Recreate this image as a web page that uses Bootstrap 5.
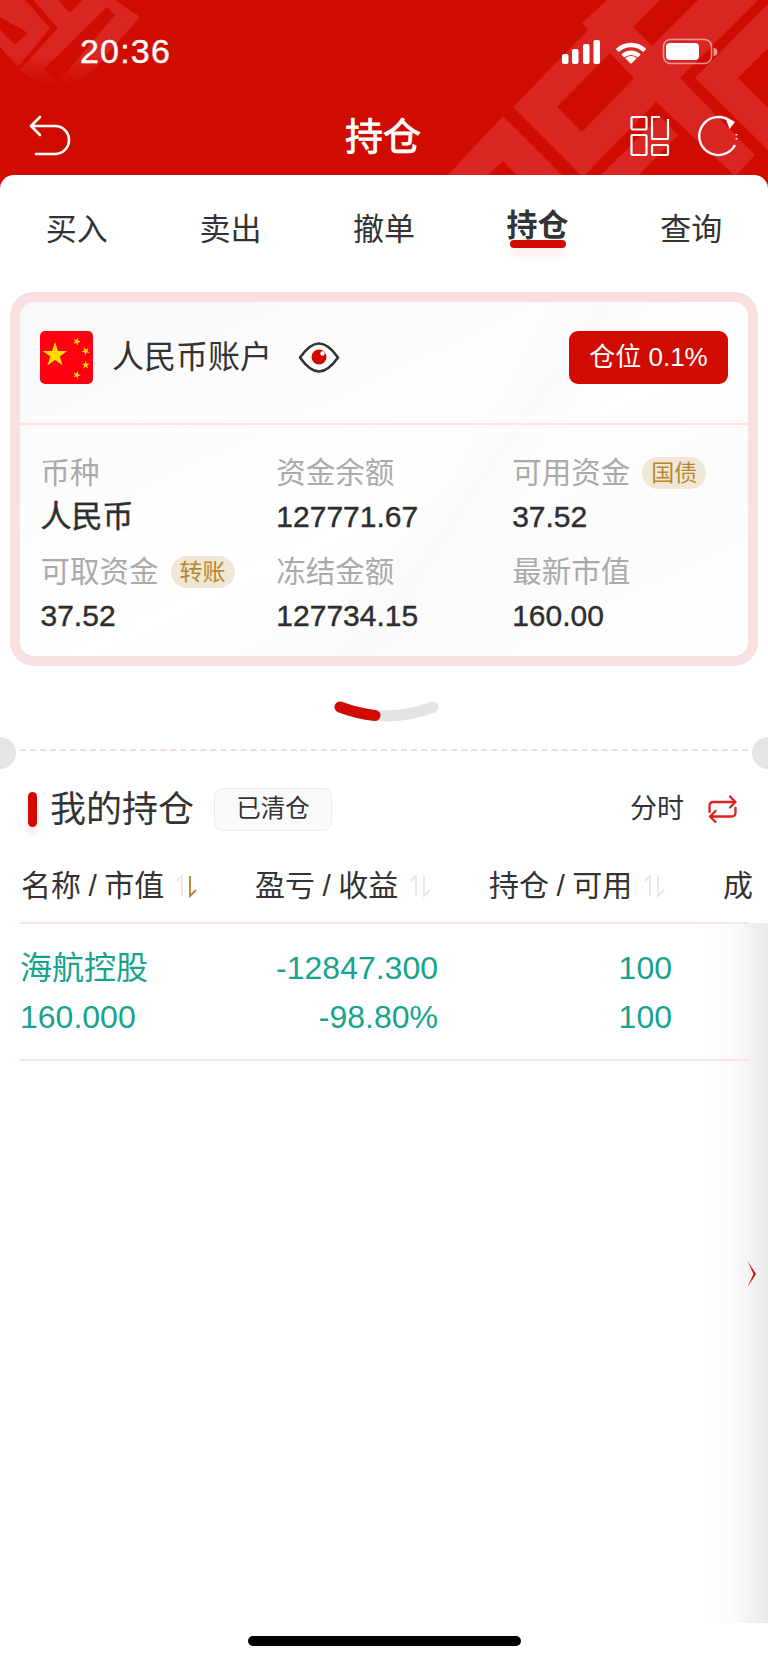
<!DOCTYPE html>
<html lang="zh-CN">
<head>
<meta charset="utf-8">
<title>持仓</title>
<link href="https://cdn.jsdelivr.net/npm/bootstrap@5.3.0/dist/css/bootstrap.min.css" rel="stylesheet">
<style>
html,body{margin:0;height:100%;}
body{width:768px;height:1663px;overflow:hidden;font-family:"Liberation Sans","Noto Sans CJK SC",sans-serif;color:#333;background:#fff;}
.shell{width:768px;height:1663px;background:#d00c00;position:relative;overflow:hidden;}
.hero-art{position:absolute;left:0;top:0;width:768px;height:176px;}
.hero{position:relative;height:175px;color:#fff;}
.status-row{height:100px;padding:0 50px 0 80px;}
.clock{font-size:34px;line-height:1;letter-spacing:1.2px;margin-top:2px;-webkit-text-stroke:.4px #fff;}
.nav-row{height:55px;margin-top:8px;padding:0 28px 0 26px;}
.nav-side{flex:1 1 0;}
.nav-title{font-size:38px;font-weight:400;line-height:1;margin-top:2px;-webkit-text-stroke:.8px #fff;}
.sheet{position:relative;flex:1 1 auto;background:#fff;border-radius:14px 14px 0 0;}
.tab-row{height:117px;}
.tab-cell{width:153.6px;text-align:center;padding-top:35px;font-size:31px;line-height:40px;color:#333;}
.tab-cell.is-on{padding-top:31px;}
.tab-cell.is-on span{position:relative;display:inline-block;font-weight:700;}
.tab-cell.is-on span::after{content:"";position:absolute;left:3px;right:3px;top:34px;height:8px;border-radius:4px;background:#d00c00;box-shadow:0 7px 8px rgba(208,12,0,.1);}
.acct{margin:0 10px;border:10px solid #f9e0e0;border-radius:24px;height:374px;background:linear-gradient(125deg,rgba(250,250,250,0) 54%,#fafafa 60%,rgba(250,250,250,0) 67%),linear-gradient(155deg,#f8f8f8 0%,#fdfdfd 38%,#fff 55%,#fbfbfb 72%,#fff 100%);}
.acct-head{height:123px;padding:29px 20px 0 20px;border-bottom:2px solid #fae4e4;}
.acct-name{font-size:32px;line-height:53px;margin-left:19px;color:#333;}
.eye{margin-left:25px;}
.acct-pos{width:159px;height:53px;border-radius:9px;background:#d00c00;color:#fff;font-size:26px;line-height:53px;text-align:center;}
.acct-grid{padding:26px 0 0 20.5px;}
.acct-item{height:99px;}
.acct-label{font-size:29.5px;line-height:44px;color:#aaa;white-space:nowrap;}
.acct-value{font-size:30px;line-height:44px;color:#2e2e2e;-webkit-text-stroke:.4px #2e2e2e;}
.acct-cny{font-size:31px;}
.tag-gold{display:inline-block;vertical-align:top;margin:6px 0 0 12px;width:64px;height:32px;border-radius:16px;background:#f1e7d6;color:#b8862f;font-size:23px;line-height:32px;text-align:center;}
.arc-wrap{margin-top:34px;height:24px;}
.cut-line{position:relative;margin:25px 20px 0;border-top:2px dashed #fbd9d9;}
.cut-dot{position:absolute;top:-14px;width:32px;height:32px;border-radius:50%;background:#e5e5e5;}
.cut-dot.l{left:-36px;}
.cut-dot.r{right:-36px;}
.hold-head{margin-top:37px;height:43px;padding:0 30px 0 28px;}
.hold-bar{width:9px;height:35px;border-radius:5px;background:#d00c00;box-shadow:0 8px 7px rgba(208,12,0,.12);}
.hold-title{font-size:36px;line-height:43px;margin-left:13px;color:#333;}
.hold-btn{margin-left:20px;width:118px;height:43px;border:1.5px solid #ececec;border-radius:9px;background:#fafafa;font-size:24.5px;line-height:40px;text-align:center;color:#333;}
.hold-mode{font-size:27px;line-height:43px;color:#333;margin-right:24px;}
.tbl-clip{margin:0 19px 0 20px;}
.pos-table{width:729px;table-layout:fixed;margin:0;}
.pos-table th,.pos-table td{padding:0;background:transparent;border:0;box-shadow:none;}
.pos-table th{width:234px;padding:35px 0 16px 1px;font-size:30px;line-height:40px;font-weight:400;color:#333;white-space:nowrap;border-bottom:2px solid #fde3e3;}
.pos-table th.tail-col{width:27px;}
.pos-table td{padding:20px 50px 17px 0;font-size:32px;line-height:49px;color:#17a38d;text-align:right;border-bottom:2px solid #fde3e3;}
.pos-table td.first-cell{padding-left:0;text-align:left;}
.pos-table td.tail-col{padding:0;}
.pos-table tr{--bs-table-bg:transparent;}
.slashy{font-family:"Liberation Sans",sans-serif;margin:0 7.5px;}
.sort-ico{margin-left:11px;vertical-align:-3px;}
.edge-fade{position:absolute;right:0;top:748px;width:68px;height:700px;background:linear-gradient(90deg,rgba(232,232,232,0),rgba(232,232,232,.15) 45%,#ebebeb 100%);}
.edge-chev{position:absolute;left:47px;top:337px;}
.home-bar{position:absolute;left:248px;bottom:17px;width:273px;height:10px;border-radius:5px;background:#000;}
</style>
</head>
<body>
<div class="shell d-flex flex-column">
  <svg class="hero-art" viewBox="0 0 768 176" aria-hidden="true">
    <defs>
      <linearGradient id="fadeL" gradientUnits="userSpaceOnUse" x1="0" y1="55" x2="0" y2="84">
        <stop offset="0" stop-color="#da2622"/><stop offset="1" stop-color="#d00c00"/>
      </linearGradient>
    </defs>
    <polygon fill="#da2622" points="607,0 582,23 588,30 513,107 582,176 768,176 768,0"/>
    <polygon fill="#da2622" points="503,116 447,176 487,176 503,161 518,176 563,176"/>
    <g fill="#d00c00">
      <polygon points="557,107 610,53 634,78 582,132"/>
      <polygon points="656,102 584,176 600,176 660,116 678,135 638,176 735,176"/>
      <polygon points="680,78 758,0 772,0 695,78 768,150 768,176 735,176 755,155"/>
      <polygon points="738,78 768,48 768,108"/>
      <polygon points="660,0 633,27 652,46 698,0"/>
    </g>
    <polygon fill="url(#fadeL)" points="0,0 25,0 50,28 18,67 0,47"/>
    <polygon fill="url(#fadeL)" points="33,0 58,28 20,70 45,88 70,88 95,68 140,17 115,0"/>
    <g fill="#d00c00">
      <polygon points="0,17 28,33 15,45 0,30"/>
      <polygon points="58,0 70,13 82,0"/>
      <polygon points="43,70 107,7 115,15 58,82"/>
    </g>
  </svg>

  <header class="hero flex-shrink-0">
    <div class="status-row d-flex justify-content-between align-items-center">
      <div class="clock">20:36</div>
      <svg class="mt-1" width="158" height="30" viewBox="560 36 158 30" aria-hidden="true">
        <g fill="#fff">
          <rect x="562" y="53" width="6.5" height="10" rx="2"/>
          <rect x="572" y="48" width="6.5" height="15" rx="2"/>
          <rect x="583" y="43" width="6.5" height="20" rx="2"/>
          <rect x="593.5" y="39" width="6.5" height="24" rx="2"/>
          <path d="M631 63 L625.3 57.3 A8.2 8.2 0 0 1 636.7 57.3 Z"/>
          <rect x="666" y="42" width="33" height="17" rx="4"/>
          <path d="M713.5 47 A4 4 0 0 1 713.5 55 Z" opacity=".55"/>
        </g>
        <g fill="none" stroke="#fff" stroke-width="4.4">
          <path d="M617.3 49.5 A20 20 0 0 1 644.7 49.5"/>
          <path d="M622.8 55 A12 12 0 0 1 639.2 55"/>
        </g>
        <rect x="663.5" y="38.5" width="48" height="24" rx="7" fill="none" stroke="#fff" stroke-opacity=".55" stroke-width="1.6"/>
      </svg>
    </div>
    <div class="nav-row d-flex align-items-center">
      <div class="nav-side d-flex">
        <svg width="48" height="48" viewBox="26 112 48 48" fill="none" stroke="#fff" stroke-width="2.6" stroke-linecap="round" stroke-linejoin="round" aria-hidden="true"><path d="M40 117 L31 126 L40 135 M31 126 H55 A14 14 0 0 1 55 154 H36"/></svg>
      </div>
      <div class="nav-title">持仓</div>
      <div class="nav-side d-flex justify-content-end" style="gap:26px">
        <svg width="40" height="44" viewBox="630 114 40 44" fill="none" stroke="#fff" stroke-width="2.2" stroke-linejoin="round" aria-hidden="true">
          <rect x="631.5" y="117" width="15" height="12.5" rx="1"/>
          <rect x="631.5" y="135" width="15" height="20" rx="1"/>
          <path d="M660 117 H652 V139 H668 V119"/>
          <rect x="652" y="145" width="16" height="10" rx="1"/>
        </svg>
        <svg width="44" height="44" viewBox="696 114 44 44" fill="none" stroke="#fff" stroke-width="2.4" aria-hidden="true">
          <path d="M731 122 A19 19 0 1 0 735 145"/>
          <path d="M725 116.5 L735 122 L729.5 129 Z" fill="#fff" stroke="none"/>
          <path d="M736.5 134 V142" stroke-width="1.6" stroke-dasharray="1.6 2.4"/>
        </svg>
      </div>
    </div>
  </header>

  <main class="sheet d-flex flex-column">
    <nav class="tab-row d-flex flex-shrink-0">
      <div class="tab-cell"><span>买入</span></div>
      <div class="tab-cell"><span>卖出</span></div>
      <div class="tab-cell"><span>撤单</span></div>
      <div class="tab-cell is-on"><span>持仓</span></div>
      <div class="tab-cell"><span>查询</span></div>
    </nav>

    <section class="acct flex-shrink-0">
      <div class="acct-head d-flex align-items-start">
        <svg width="53" height="53" viewBox="0 0 53 53" aria-hidden="true">
          <defs><polygon id="st5" points="0,-1 .225,-.309 .951,-.309 .363,.118 .588,.809 0,.382 -.588,.809 -.363,.118 -.951,-.309 -.225,-.309"/></defs>
          <rect width="53" height="53" rx="5" fill="#fe0010"/>
          <g fill="#ffdc00">
            <use href="#st5" transform="translate(15 24) scale(13)"/>
            <use href="#st5" transform="translate(36.7 10.5) rotate(20) scale(4.2)"/>
            <use href="#st5" transform="translate(45.7 20) rotate(45) scale(4.2)"/>
            <use href="#st5" transform="translate(45.7 34) rotate(0) scale(4.2)"/>
            <use href="#st5" transform="translate(36.7 44) rotate(20) scale(4.2)"/>
          </g>
        </svg>
        <div class="acct-name">人民币账户</div>
        <svg class="eye" width="44" height="53" viewBox="297 331 44 53" aria-hidden="true">
          <path d="M300 357.5 C306 349 312 343.5 319 343.5 C326 343.5 332 349 338 357.5 C332 366 326 371.5 319 371.5 C312 371.5 306 366 300 357.5Z" fill="none" stroke="#333" stroke-width="2.6" stroke-linejoin="round"/>
          <circle cx="319" cy="357" r="7.5" fill="#d00c00"/>
          <circle cx="322.5" cy="353.5" r="2.2" fill="#fff"/>
        </svg>
        <div class="acct-pos ms-auto">仓位 0.1%</div>
      </div>
      <div class="acct-grid row g-0">
        <div class="col-4 acct-item"><div class="acct-label">币种</div><div class="acct-value acct-cny">人民币</div></div>
        <div class="col-4 acct-item"><div class="acct-label">资金余额</div><div class="acct-value">127771.67</div></div>
        <div class="col-4 acct-item"><div class="acct-label">可用资金<span class="tag-gold">国债</span></div><div class="acct-value">37.52</div></div>
        <div class="col-4 acct-item"><div class="acct-label">可取资金<span class="tag-gold">转账</span></div><div class="acct-value">37.52</div></div>
        <div class="col-4 acct-item"><div class="acct-label">冻结金额</div><div class="acct-value">127734.15</div></div>
        <div class="col-4 acct-item"><div class="acct-label">最新市值</div><div class="acct-value">160.00</div></div>
      </div>
    </section>

    <div class="arc-wrap d-flex justify-content-center flex-shrink-0">
      <svg width="110" height="24" viewBox="329 700 110 24" fill="none" stroke-width="11" stroke-linecap="round" aria-hidden="true">
        <path d="M340 707 Q386 725 433 707" stroke="#e3e3e3"/>
        <path d="M340 707 Q357 713.5 375 715.5" stroke="#d00c00"/>
      </svg>
    </div>

    <div class="cut-line flex-shrink-0"><i class="cut-dot l"></i><i class="cut-dot r"></i></div>

    <div class="hold-head d-flex align-items-center flex-shrink-0">
      <div class="hold-bar"></div>
      <div class="hold-title">我的持仓</div>
      <div class="hold-btn">已清仓</div>
      <div class="hold-mode ms-auto">分时</div>
      <svg width="30" height="30" viewBox="708 795 30 30" fill="none" stroke="#e02020" stroke-width="2.3" stroke-linecap="round" stroke-linejoin="round" aria-hidden="true">
        <path d="M709.5 812 V806 Q709.5 802 713.5 802 H735 M730 796.5 L735.5 802 L730 807.5"/>
        <path d="M735.5 808 V812.5 Q735.5 816.5 731.5 816.5 H710 M715.5 811 L710 816.5 L715.5 822"/>
      </svg>
    </div>

    <div class="tbl-clip flex-shrink-0">
      <table class="table table-borderless pos-table">
        <thead>
          <tr>
            <th>名称<span class="slashy">/</span>市值<svg class="sort-ico" width="22" height="26" viewBox="174 872 22 26" fill="none" stroke-width="1.8" aria-hidden="true"><path d="M175.5 880 L181 875 V895" stroke="#e8e8e8"/><path d="M189 875 V895 L195 889" stroke="#b9822b"/></svg></th>
            <th>盈亏<span class="slashy">/</span>收益<svg class="sort-ico" width="22" height="26" viewBox="174 872 22 26" fill="none" stroke-width="1.8" aria-hidden="true"><path d="M175.5 880 L181 875 V895" stroke="#e8e8e8"/><path d="M189 875 V895 L195 889" stroke="#e8e8e8"/></svg></th>
            <th>持仓<span class="slashy">/</span>可用<svg class="sort-ico" width="22" height="26" viewBox="174 872 22 26" fill="none" stroke-width="1.8" aria-hidden="true"><path d="M175.5 880 L181 875 V895" stroke="#e8e8e8"/><path d="M189 875 V895 L195 889" stroke="#e8e8e8"/></svg></th>
            <th class="tail-col">成</th>
          </tr>
        </thead>
        <tbody>
          <tr>
            <td class="first-cell">海航控股<br>160.000</td>
            <td>-12847.300<br>-98.80%</td>
            <td>100<br>100</td>
            <td class="tail-col"></td>
          </tr>
        </tbody>
      </table>
    </div>

    <aside class="edge-fade">
      <svg class="edge-chev" width="10" height="28" viewBox="0 0 10 28" aria-hidden="true"><path d="M0.5 1 L9 14 L0.5 27 L6.5 14 Z" fill="#d00c00"/></svg>
    </aside>
    <div class="home-bar"></div>
  </main>
</div>
<script src="https://cdn.jsdelivr.net/npm/bootstrap@5.3.0/dist/js/bootstrap.bundle.min.js"></script>
</body>
</html>
